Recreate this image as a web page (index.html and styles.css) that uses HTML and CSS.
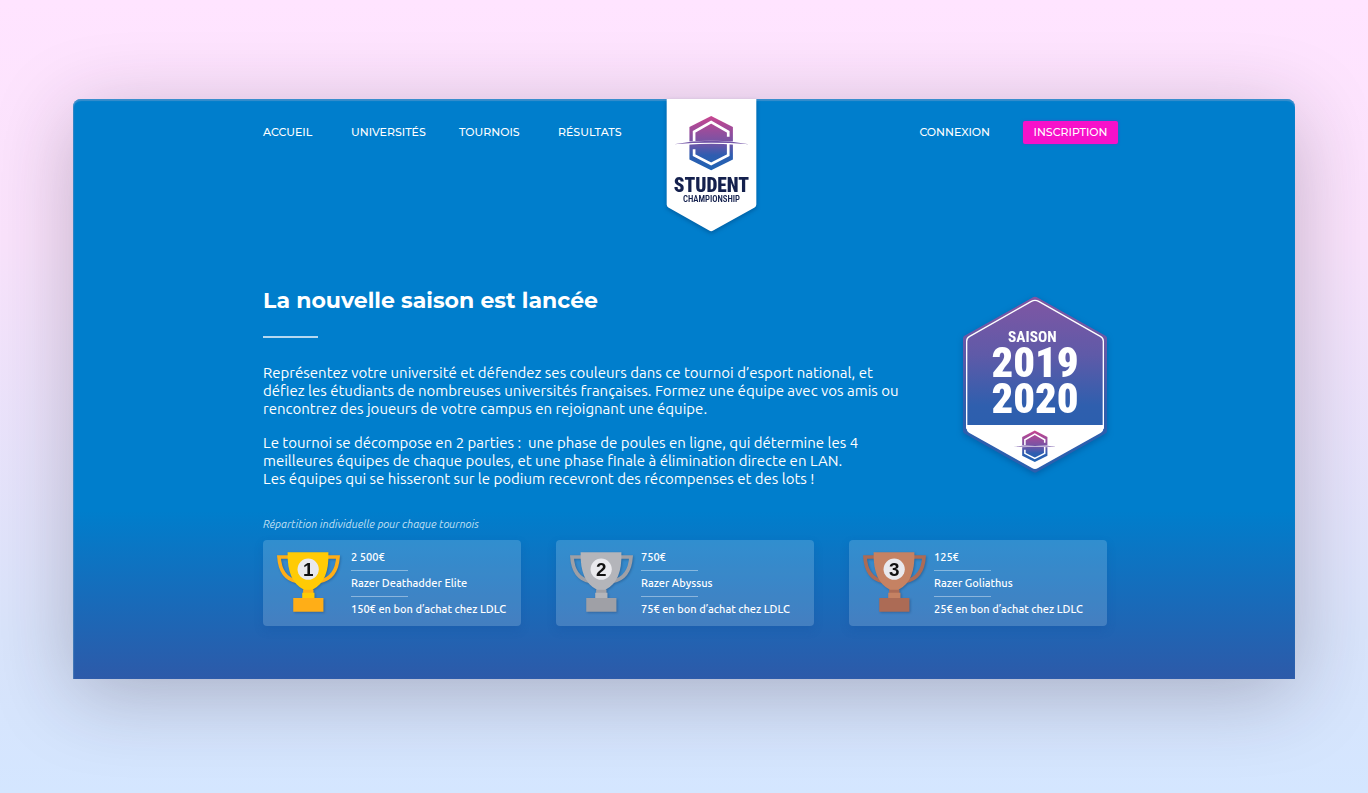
FILE: index.html
```html
<!DOCTYPE html>
<html lang="fr">
<head>
<meta charset="utf-8">
<meta name="viewport" content="width=device-width, initial-scale=1">
<title>Student Championship</title>
<link rel="stylesheet" href="styles.css">
</head>
<body>
<svg class="defs" aria-hidden="true">
  <defs>
    <linearGradient id="emblem-fill" x1="0" y1="78" x2="0" y2="240" gradientUnits="userSpaceOnUse">
      <stop offset="0" stop-color="#c8458f"/>
      <stop offset=".5" stop-color="#7254a6"/>
      <stop offset=".72" stop-color="#2f5db0"/>
      <stop offset="1" stop-color="#1f63b3"/>
    </linearGradient>
    <linearGradient id="badge-fill" x1="0" y1="36" x2="0" y2="420" gradientUnits="userSpaceOnUse">
      <stop offset="0" stop-color="#8056a3"/>
      <stop offset=".45" stop-color="#5f5aa8"/>
      <stop offset=".85" stop-color="#2f5fae"/>
      <stop offset="1" stop-color="#2c5fae"/>
    </linearGradient>
    <symbol id="emblem" viewBox="70 74 230 170">
      <path d="M184 78 249 111V208L184 240 119 208V111Z" fill="url(#emblem-fill)"/>
      <path d="M235 140V125L184 96 133 125V156M133 177V195L184 221 235 195V160" fill="none" stroke="#fff" stroke-width="8"/>
      <path d="M112 154Q184 150 256 154V164Q184 158 112 164Z" fill="#fff"/>
      <path d="M73 162Q184 142 297 162Q184 154 73 162Z" fill="#7254a6"/>
    </symbol>
    <symbol id="trophy" viewBox="60 120 208 194">
      <g fill="none" stroke="var(--cup-dark)" stroke-width="11">
        <path d="M104 140H72Q76 204 126 214"/>
        <path d="M216 140H250Q246 204 194 214"/>
      </g>
      <path d="M98 126H221Q224 214 174 238V248H146V238Q96 214 98 126Z" fill="var(--cup)"/>
      <path d="M145 239H176V249H145Z" fill="var(--cup-dark)"/>
      <path d="M142 248H179V264H142Z" fill="var(--cup)"/>
      <path d="M115 264H206V305H115Z" fill="var(--cup-dark)"/>
      <circle cx="160" cy="177" r="32" fill="#e9e9ed"/>
    </symbol>
  </defs>
</svg>

<div class="window">
  <header class="header">
    <nav class="menu" aria-label="Navigation principale">
      <a href="#">ACCUEIL</a>
      <a href="#">UNIVERSITÉS</a>
      <a href="#">TOURNOIS</a>
      <a href="#">RÉSULTATS</a>
    </nav>
    <a class="logo" href="#" aria-label="Student Championship">
      <svg viewBox="49 27 272 405">
        <path d="M51 27H319V342Q319 348 314 351L190 420Q184 424 178 420L56 351Q51 348 51 342Z" fill="#fff"/>
        <use href="#emblem" x="70" y="74" width="230" height="170"/>
        <text class="logo-name" x="185" y="304">STUDENT</text>
        <text class="logo-sub" x="185" y="334">CHAMPIONSHIP</text>
      </svg>
    </a>
    <div class="account">
      <a href="#">CONNEXION</a>
      <button class="signup" type="button">INSCRIPTION</button>
    </div>
  </header>

  <main class="content">
    <section class="intro">
      <div class="copy">
        <h1>La nouvelle saison est lancée</h1>
        <p>Représentez votre université et défendez ses couleurs dans ce tournoi d’esport national, et<br>
        défiez les étudiants de nombreuses universités françaises. Formez une équipe avec vos amis ou<br>
        rencontrez des joueurs de votre campus en rejoignant une équipe.</p>
        <p>Le tournoi se décompose en 2 parties :&nbsp; une phase de poules en ligne, qui détermine les 4<br>
        meilleures équipes de chaque poules, et une phase finale à élimination directe en LAN.<br>
        Les équipes qui se hisseront sur le podium recevront des récompenses et des lots !</p>
      </div>
      <svg class="season" viewBox="33 30 438 540" role="img" aria-label="Saison 2019 2020">
        <path d="M255 44 462 160V438L255 554 48 438V160Z" fill="url(#badge-fill)" stroke="url(#badge-fill)" stroke-width="18" stroke-linejoin="round"/>
        <path d="M50 420H460V431Q460 439 453 443L264 549Q255 555 246 549L57 443Q50 439 50 431Z" fill="#fff"/>
        <path d="M50 431V169Q50 159 59 154L244 49Q255 43 266 49L451 154Q460 159 460 169V431" fill="none" stroke="#fff" stroke-width="4"/>
        <text class="season-label" x="247" y="171">SAISON</text>
        <text class="season-year" x="255" y="277">2019</text>
        <text class="season-year" x="255" y="383">2020</text>
        <use href="#emblem" x="188" y="434" width="134" height="100"/>
      </svg>
    </section>

    <section class="prizes">
      <h2>Répartition individuelle pour chaque tournois</h2>
      <div class="cards">
        <article class="card gold">
          <svg class="trophy" viewBox="60 120 208 194" role="img" aria-label="1"><use href="#trophy" x="60" y="120" width="208" height="194"/><text x="160" y="197">1</text></svg>
          <ul><li>2 500€</li><li>Razer Deathadder Elite</li><li>150€ en bon d’achat chez LDLC</li></ul>
        </article>
        <article class="card silver">
          <svg class="trophy" viewBox="60 120 208 194" role="img" aria-label="2"><use href="#trophy" x="60" y="120" width="208" height="194"/><text x="160" y="197">2</text></svg>
          <ul><li>750€</li><li>Razer Abyssus</li><li>75€ en bon d’achat chez LDLC</li></ul>
        </article>
        <article class="card bronze">
          <svg class="trophy" viewBox="60 120 208 194" role="img" aria-label="3"><use href="#trophy" x="60" y="120" width="208" height="194"/><text x="160" y="197">3</text></svg>
          <ul><li>125€</li><li>Razer Goliathus</li><li>25€ en bon d’achat chez LDLC</li></ul>
        </article>
      </div>
    </section>
  </main>
</div>
</body>
</html>
```

FILE: styles.css
```css
* { box-sizing: border-box; }

body {
  margin: 0;
  min-height: 100vh;
  padding: 99px 73px 114px;
  background: linear-gradient(#ffe4ff 0, #fae3fc 30%, #d9e4fb 80%, #d4e6ff 100%);
  color: #fff;
  font-family: Ubuntu, "Noto Sans", sans-serif;
}

.defs { position: absolute; width: 0; height: 0; }

.window {
  padding: 0 188px 53px 190px;
  border-radius: 8px 8px 0 0;
  background: linear-gradient(#007ecc 0, #007ecc 71%, #2d5aa9 100%);
  box-shadow: 0 16px 80px rgba(45, 35, 50, .27), inset 0 2px 1px rgba(80, 150, 205, .7), inset 1px 0 1px rgba(90, 140, 190, .6);
}

.header {
  display: flex;
  align-items: flex-start;
  margin-right: -11px;
  font-family: Montserrat, Inter, sans-serif;
  font-size: 11px;
  font-weight: 500;
  line-height: 23px;
}

.header a { color: inherit; text-decoration: none; }

.menu {
  display: grid;
  grid-template-columns: 88px 108px 99px 108px;
  padding-top: 22px;
}

.logo { width: 91px; filter: drop-shadow(0 2px 2px rgba(0, 40, 90, .35)); }
.logo svg { display: block; width: 100%; }

.logo-name, .logo-sub {
  fill: #14204d;
  font-family: "Roboto Condensed", "Liberation Sans Narrow", Roboto, sans-serif;
  text-anchor: middle;
}
.logo-name { font-size: 58px; font-weight: 900; }
.logo-sub { font-size: 26px; font-weight: 600; }

.account {
  display: flex;
  gap: 33px;
  margin-left: auto;
  padding-top: 22px;
}

.signup {
  width: 95px;
  height: 23px;
  padding: 0;
  border: 0;
  border-radius: 2px;
  background: #f711ca;
  box-shadow: 0 0 3px rgba(120, 40, 190, .6);
  color: inherit;
  font: inherit;
}

.intro {
  display: flex;
  justify-content: space-between;
  margin-top: 53px;
}

.copy { white-space: nowrap; }

h1 {
  margin: 0 0 26px;
  font-family: Montserrat, Inter, sans-serif;
  font-size: 22px;
  font-weight: 700;
  line-height: 28px;
}

h1::after {
  display: block;
  width: 55px;
  height: 2px;
  margin-top: 21px;
  background: #b5d8f0;
  content: "";
}

.copy p {
  margin: 0 0 16px;
  font-size: 15px;
  line-height: 18px;
}

.season {
  flex: none;
  width: 146px;
  height: 180px;
  margin-top: 8px;
  filter: drop-shadow(0 2px 3px rgba(0, 50, 110, .35));
}
.season text {
  fill: #fff;
  font-family: "Roboto Condensed", "Liberation Sans Narrow", Roboto, sans-serif;
  text-anchor: middle;
}
.season-label { font-size: 46px; font-weight: 700; }
.season-year { font-size: 128px; font-weight: 900; }

h2 {
  margin: 12px 0 8px;
  color: #c2e0f4;
  font-size: 11px;
  font-style: italic;
  font-weight: 400;
  line-height: 16px;
}

.cards {
  display: grid;
  grid-template-columns: repeat(3, 1fr);
  gap: 35px;
}

.card {
  display: flex;
  gap: 4px;
  padding: 5px 12px 4px;
  border-radius: 4px;
  background: rgba(255, 255, 255, .17);
  box-shadow: 0 4px 10px rgba(20, 70, 150, .2);
  white-space: nowrap;
}

.gold { --cup: #ffcb05; --cup-dark: #ffae17; gap: 7px; }
.silver { --cup: #b4b5ba; --cup-dark: #9fa0a6; }
.bronze { --cup: #c58263; --cup-dark: #ac6b55; }

.trophy {
  flex: none;
  width: 69px;
  height: 65px;
  margin-top: 5px;
  filter: drop-shadow(1px 1px 1px rgba(20, 50, 90, .35));
}
.trophy text {
  fill: #111;
  font: 700 57px "Liberation Sans", sans-serif;
  text-anchor: middle;
}

ul {
  margin: 0;
  padding: 0;
  font-size: 11px;
  font-weight: 500;
  line-height: 25px;
  list-style: none;
}

li:not(:last-child)::after {
  display: block;
  width: 57px;
  height: 1px;
  background: rgba(255, 255, 255, .4);
  content: "";
}
```
